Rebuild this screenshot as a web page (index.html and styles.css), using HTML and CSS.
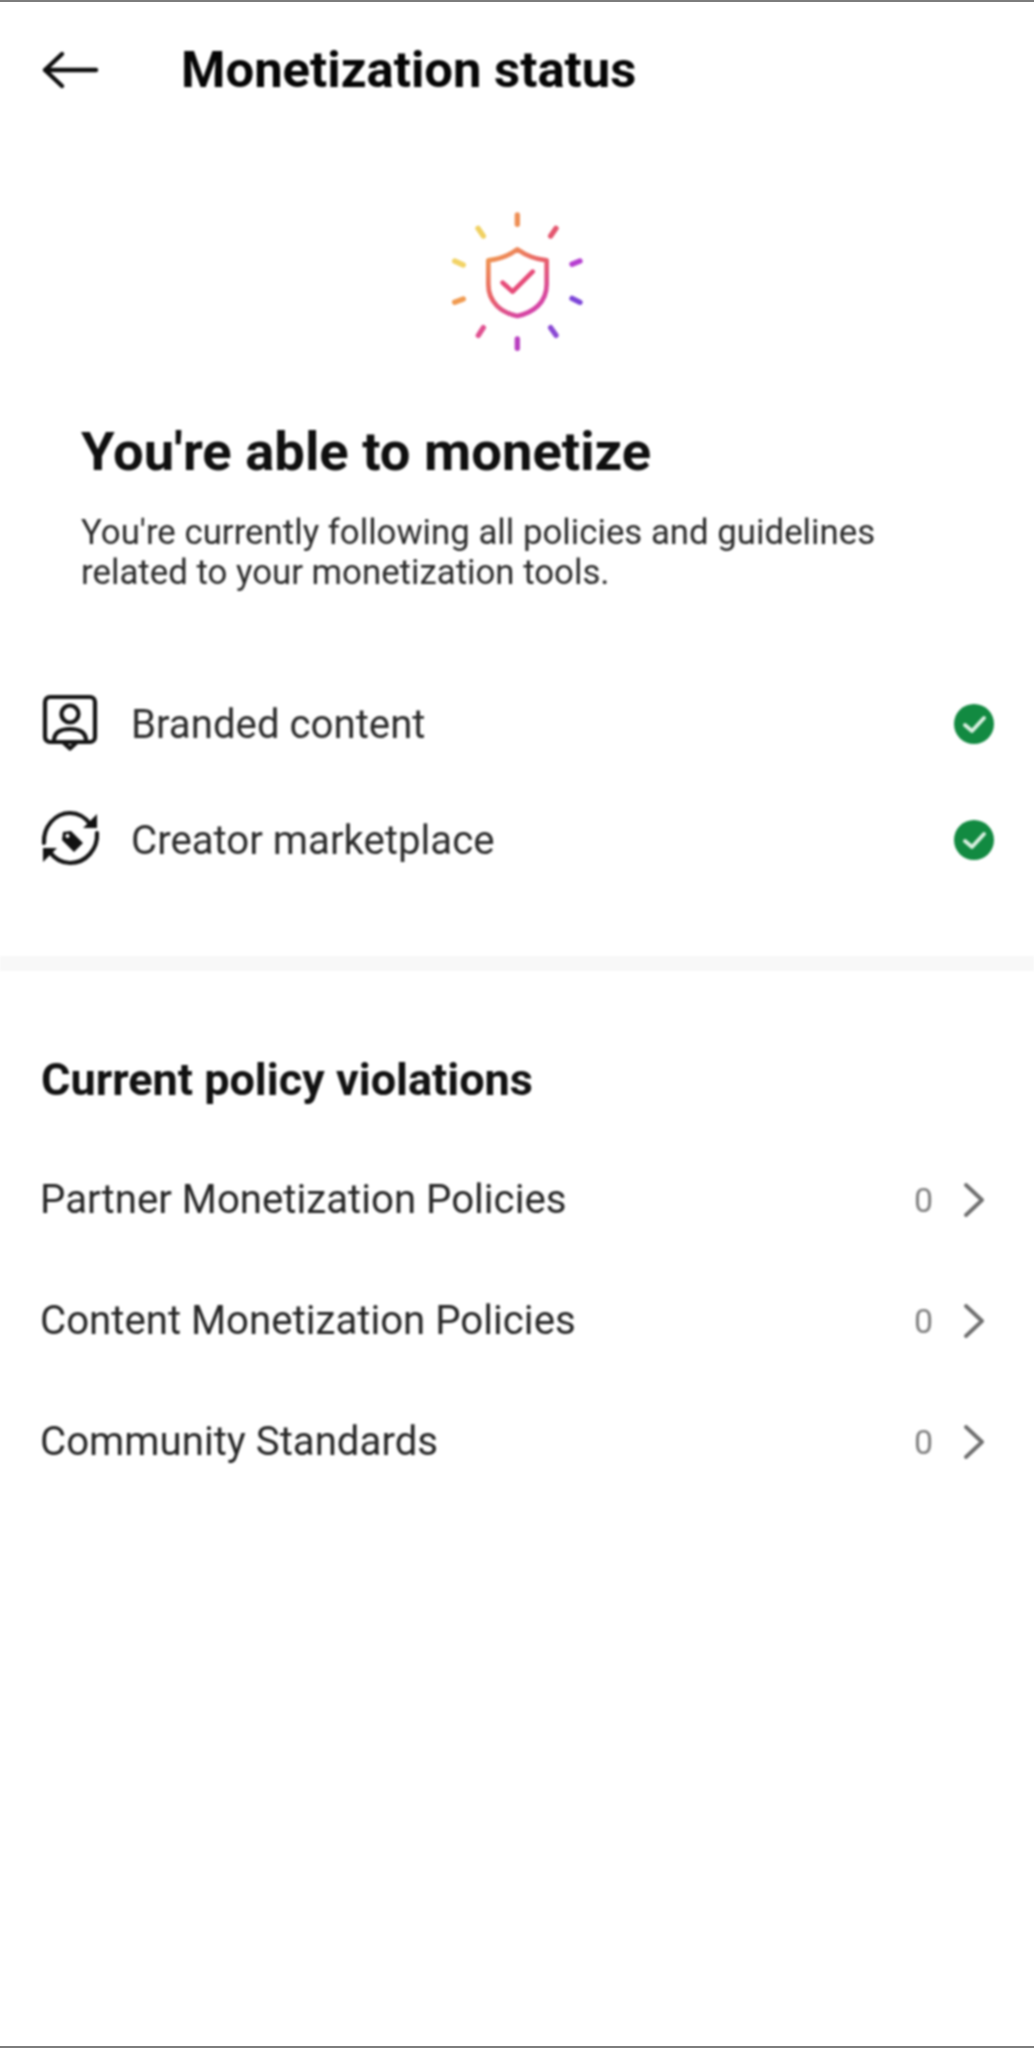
FILE: index.html
```html
<!DOCTYPE html>
<html lang="en">
<head>
<meta charset="utf-8">
<title>Monetization status</title>
<link rel="stylesheet" href="styles.css">
</head>
<body>
<div class="frame">
<div class="screen">
  <header class="topbar">
    <svg class="back" viewBox="0 0 60 40" aria-hidden="true"><path d="M55 20H4M21 4 4 20l17 16"/></svg>
    <h1 class="title">Monetization status</h1>
  </header>
  <div class="hero">
    <svg class="shield" viewBox="0 0 510 480" aria-hidden="true">
      <defs>
        <linearGradient id="sg" x1="0.1" y1="0" x2="0.75" y2="1">
          <stop offset="0" stop-color="#f09a4e"/>
          <stop offset="0.5" stop-color="#e8606a"/>
          <stop offset="1" stop-color="#d23fae"/>
        </linearGradient>
      </defs>
      <g class="rays">
        <path stroke="#ee8f55" d="M262 42V70"/>
        <path stroke="#e4566f" d="M378 82 362 105"/>
        <path stroke="#b63fd0" d="M426 190 450 180"/>
        <path stroke="#7d45d8" d="M426 292 450 304"/>
        <path stroke="#8a48d4" d="M362 380 378 403"/>
        <path stroke="#b83fc0" d="M262 414V442"/>
        <path stroke="#e05090" d="M160 380 145 403"/>
        <path stroke="#f09a50" d="M100 294 74 304"/>
        <path stroke="#f2d365" d="M100 192 74 180"/>
        <path stroke="#f0d060" d="M160 105 144 82"/>
      </g>
      <path class="shield-line" stroke="url(#sg)" d="M262 145C235 165 205 175 175 178V250C175 305 215 335 262 345C310 335 350 305 350 250V178C320 175 290 165 262 145Z"/>
      <path class="shield-check" d="M218 245 248 272 308 212"/>
    </svg>
  </div>
  <section class="intro">
    <h2 class="headline">You're able to monetize</h2>
    <p class="lede">You're currently following all policies and guidelines<br>related to your monetization tools.</p>
  </section>
  <ul class="tools">
    <li class="tool">
      <svg class="tool-icon" viewBox="0 0 60 60" aria-hidden="true">
        <rect x="5" y="3" width="50" height="45" rx="5"/>
        <circle cx="30" cy="20" r="8.5"/>
        <path d="M14 47C14 38 21 35 30 35S46 38 46 47M24 49 30 54.500 36 49"/>
      </svg>
      <span class="tool-name">Branded content</span>
      <svg class="ok" viewBox="0 0 40 40" aria-hidden="true"><circle cx="20" cy="20" r="20"/><path d="M11 21l7 6 12-13"/></svg>
    </li>
    <li class="tool">
      <svg class="tool-icon" viewBox="0 0 60 60" aria-hidden="true">
        <path d="M4 33C3 17 15 3 30 3 39 3 46 8 51 15M57 23C58 39 46 53 30 53 21 53 14 48 9 41"/>
        <path class="fill" d="M57 4V18H43ZM3 52V38H17Z"/>
        <path class="fill" fill-rule="evenodd" d="M23 22 31 21 43 33 34 42 22 30ZM27.500 24a2 2 0 1 0 .01 0Z"/>
      </svg>
      <span class="tool-name">Creator marketplace</span>
      <svg class="ok" viewBox="0 0 40 40" aria-hidden="true"><circle cx="20" cy="20" r="20"/><path d="M11 21l7 6 12-13"/></svg>
    </li>
  </ul>
  <div class="band"></div>
  <section class="violations">
    <h3 class="section-title">Current policy violations</h3>
    <ul class="policies">
      <li class="policy"><span class="policy-name">Partner Monetization Policies</span><span class="count">0</span><svg class="chev" viewBox="0 0 20 34" aria-hidden="true"><path d="M2 2 18 17 2 32"/></svg></li>
      <li class="policy"><span class="policy-name">Content Monetization Policies</span><span class="count">0</span><svg class="chev" viewBox="0 0 20 34" aria-hidden="true"><path d="M2 2 18 17 2 32"/></svg></li>
      <li class="policy"><span class="policy-name">Community Standards</span><span class="count">0</span><svg class="chev" viewBox="0 0 20 34" aria-hidden="true"><path d="M2 2 18 17 2 32"/></svg></li>
    </ul>
  </section>
</div>
</div>
</body>
</html>
```
FILE: styles.css
```css
* { box-sizing: border-box; }
html, body { margin: 0; padding: 0; background: #fff; }
body { font-family: Roboto, "Liberation Sans", sans-serif; color: #222; }
.frame {
  width: 1034px;
  height: 2048px;
  border-top: 2px solid #7d7d7d;
  border-bottom: 2px solid #7d7d7d;
  overflow: hidden;
}
.screen {
  height: 100%;
  display: flex;
  flex-direction: column;
  filter: blur(1px);
}
.topbar {
  height: 136px;
  display: flex;
  align-items: center;
  padding-left: 41px;
  flex: none;
}
.back { width: 60px; height: 40px; flex: none; fill: none; stroke: #0d0d0d; stroke-width: 4.4; stroke-linecap: round; stroke-linejoin: round; }
.title { margin: 0 0 0 80px; font-size: 50.800px; font-weight: 700; color: #050505; line-height: 60px; }
.hero { height: 160px; margin-top: 63px; flex: none; display: flex; justify-content: center; padding-right: 5px; }
.shield { width: 170px; height: 160px; }
.rays path { fill: none; stroke-width: 16; stroke-linecap: round; }
.shield-line { fill: none; stroke-width: 14; stroke-linejoin: round; }
.shield-check { fill: none; stroke: #e64a78; stroke-width: 14; stroke-linecap: round; stroke-linejoin: round; }
.intro { padding-left: 81px; margin-top: 56px; flex: none; }
.headline { margin: 0; font-size: 54.400px; font-weight: 700; line-height: 70px; color: #0f0f0f; }
.lede { margin: 25px 0 0; font-size: 34.800px; line-height: 40px; color: #2a2a2a; }
.tools { list-style: none; margin: 74px 0 0; padding: 0 41px; }
.tool { height: 116px; display: flex; align-items: center; }
.tool-icon { width: 60px; height: 60px; margin-left: -1px; flex: none; fill: none; stroke: #141414; stroke-width: 4.2; stroke-linecap: round; stroke-linejoin: round; }
.tool-icon .fill { fill: #111; stroke: none; }
.tool-name { margin-left: 31px; font-size: 40.200px; color: #2b2b2b; flex: 1; }
.ok { width: 40px; height: 40px; flex: none; margin-right: -1px; }
.ok circle { fill: #128a41; }
.ok path { fill: none; stroke: #d8efdf; stroke-width: 4; stroke-linecap: round; stroke-linejoin: round; }
.band { height: 15px; background: #f8f8f8; margin-top: 58px; flex: none; }
.violations { padding: 0 41px; margin-top: 81px; flex: none; }
.section-title { margin: 0; font-size: 45px; font-weight: 700; line-height: 56px; color: #111; }
.policies { list-style: none; margin: 31px 0 0; padding: 0; }
.policy { height: 121px; display: flex; align-items: center; }
.policy-name { flex: 1; font-size: 40.200px; color: #262626; margin-left: -1px; }
.count { font-size: 34px; color: #808080; margin-right: 31px; margin-left: 2px; }
.chev { width: 20px; height: 34px; margin-right: 9px; fill: none; stroke: #6e6e6e; stroke-width: 3.8; stroke-linecap: round; stroke-linejoin: round; flex: none; }
```
